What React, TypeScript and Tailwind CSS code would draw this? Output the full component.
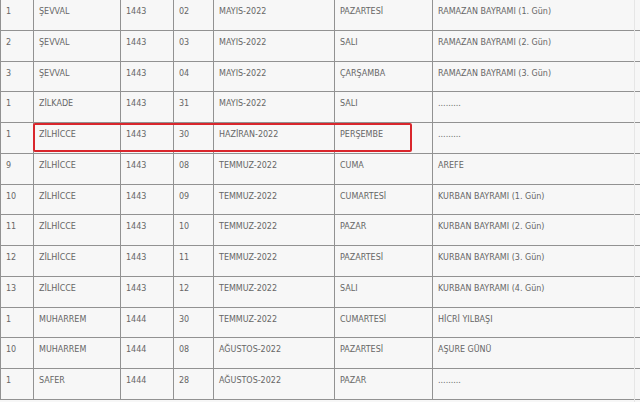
const rows: string[][] = [
  ["1", "ŞEVVAL", "1443", "02", "MAYIS-2022", "PAZARTESİ", "RAMAZAN BAYRAMI (1. Gün)"],
  ["2", "ŞEVVAL", "1443", "03", "MAYIS-2022", "SALI", "RAMAZAN BAYRAMI (2. Gün)"],
  ["3", "ŞEVVAL", "1443", "04", "MAYIS-2022", "ÇARŞAMBA", "RAMAZAN BAYRAMI (3. Gün)"],
  ["1", "ZİLKADE", "1443", "31", "MAYIS-2022", "SALI", "........."],
  ["1", "ZİLHİCCE", "1443", "30", "HAZİRAN-2022", "PERŞEMBE", "........."],
  ["9", "ZİLHİCCE", "1443", "08", "TEMMUZ-2022", "CUMA", "AREFE"],
  ["10", "ZİLHİCCE", "1443", "09", "TEMMUZ-2022", "CUMARTESİ", "KURBAN BAYRAMI (1. Gün)"],
  ["11", "ZİLHİCCE", "1443", "10", "TEMMUZ-2022", "PAZAR", "KURBAN BAYRAMI (2. Gün)"],
  ["12", "ZİLHİCCE", "1443", "11", "TEMMUZ-2022", "PAZARTESİ", "KURBAN BAYRAMI (3. Gün)"],
  ["13", "ZİLHİCCE", "1443", "12", "TEMMUZ-2022", "SALI", "KURBAN BAYRAMI (4. Gün)"],
  ["1", "MUHARREM", "1444", "30", "TEMMUZ-2022", "CUMARTESİ", "HİCRİ YILBAŞI"],
  ["10", "MUHARREM", "1444", "08", "AĞUSTOS-2022", "PAZARTESİ", "AŞURE GÜNÜ"],
  ["1", "SAFER", "1444", "28", "AĞUSTOS-2022", "PAZAR", "........."],
];

export default function App() {
  return (
    <div
      className="relative w-[640px] h-[402px] overflow-hidden bg-[#f7f7f7] text-[#666666] text-[8px]"
      style={{ fontFamily: '"DejaVu Sans", Verdana, sans-serif' }}
    >
      <div className="border-l border-[#929292]">
        {rows.map((row, i) => (
          <div
            key={i}
            className="grid grid-cols-[33px_87px_53px_40px_121px_98px_1fr] h-[30.75px] border-b border-[#929292]"
          >
            {row.map((cell, j) => (
              <div
                key={j}
                className={`pl-[5px] pt-[8px] leading-[8px] whitespace-nowrap ${
                  j < 6 ? "border-r border-[#929292]" : ""
                }`}
              >
                {cell}
              </div>
            ))}
          </div>
        ))}
      </div>
      <div className="absolute left-[634px] top-0 h-full w-px bg-[#e6e6e6]" />
      <div className="absolute left-[33px] top-[123px] w-[379px] h-[29px] border-2 border-[#d9262c] rounded-[2px]" />
    </div>
  );
}
